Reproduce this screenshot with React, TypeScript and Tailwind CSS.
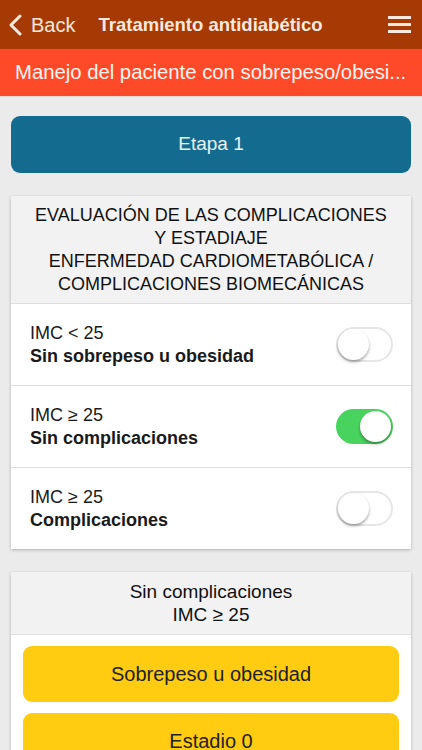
interface RowProps {
    label: string;
    title: string;
    on?: boolean;
}

function Toggle({ on }: { on?: boolean }) {
    return (
        <div className={on
            ? "w-[57px] h-[35px] rounded-full bg-[#48D35E] flex items-center justify-end px-[2px]"
            : "w-[57px] h-[35px] rounded-full bg-white border-2 border-[#e6e6e6] flex items-center justify-start"}>
            <div className="w-[31px] h-[31px] rounded-full bg-white shadow-[0_2px_3px_rgba(0,0,0,0.35)]" />
        </div>
    );
}

function Row({ label, title, on }: RowProps) {
    return (
        <div className="h-[82px] flex items-center justify-between pl-[19px] pr-[18px] border-t border-[#dedede] bg-white">
            <div className="text-[18px] leading-[23px] text-[#1a1a1a]">
                <div>{label}</div>
                <div className="font-bold">{title}</div>
            </div>
            <Toggle on={on} />
        </div>
    );
}

export default function App() {
    return (
        <div className="w-[422px] h-[750px] overflow-hidden bg-[#ebebeb] font-['Liberation_Sans',Arial,sans-serif]">
            <div className="h-[49px] bg-[#A53A05] flex items-center pl-[8px] pr-[11px] text-[#fbe9df]">
                <svg width="14" height="22" viewBox="0 0 14 22" className="mt-[1px]">
                    <path d="M12 2 L3 11 L12 20" fill="none" stroke="#fbe9df" strokeWidth="3" strokeLinecap="round" strokeLinejoin="round" />
                </svg>
                <span className="ml-[9px] text-[20px]">Back</span>
                <div className="ml-[23px] text-[18.5px] font-bold">Tratamiento antidiabético</div>
                <div className="ml-auto flex flex-col gap-[4px]">
                    <div className="w-[23px] h-[3px] bg-[#fbe9df]" />
                    <div className="w-[23px] h-[3px] bg-[#fbe9df]" />
                    <div className="w-[23px] h-[3px] bg-[#fbe9df]" />
                </div>
            </div>
            <div className="h-[48px] bg-[#FF4A2A] flex items-center px-[15px] text-[20.3px] text-[#fff4ef] border-b border-[#e2d6d0] whitespace-nowrap overflow-hidden">
                Manejo del paciente con sobrepeso/obesi...
            </div>

            <div className="px-[11px] pt-[19px]">
                <div className="h-[57px] rounded-[9px] bg-[#136B8F] flex items-center justify-center text-[19px] text-[#e8f1f5]">
                    Etapa 1
                </div>

                <div className="mt-[23px] bg-white shadow-[0_1px_3px_rgba(0,0,0,0.25)]">
                    <div className="h-[107px] bg-[#f2f2f2] flex flex-col justify-center text-center text-[18px] leading-[23px] text-[#111]">
                        <div>EVALUACIÓN DE LAS COMPLICACIONES</div>
                        <div>Y ESTADIAJE</div>
                        <div>ENFERMEDAD CARDIOMETABÓLICA /</div>
                        <div>COMPLICACIONES BIOMECÁNICAS</div>
                    </div>
                    <Row label="IMC < 25" title="Sin sobrepeso u obesidad" />
                    <Row label="IMC ≥ 25" title="Sin complicaciones" on />
                    <Row label="IMC ≥ 25" title="Complicaciones" />
                </div>

                <div className="mt-[23px] bg-white shadow-[0_1px_3px_rgba(0,0,0,0.25)] pb-[12px]">
                    <div className="h-[63px] bg-[#f2f2f2] flex flex-col justify-center text-center text-[19px] leading-[23px] text-[#111] border-b border-[#dedede]">
                        <div>Sin complicaciones</div>
                        <div>IMC ≥ 25</div>
                    </div>
                    <div className="px-[12px] pt-[11px] flex flex-col gap-[11px]">
                        <div className="h-[56px] rounded-[9px] bg-[#FFCC11] flex items-center justify-center text-[20px] text-[#222]">
                            Sobrepeso u obesidad
                        </div>
                        <div className="h-[56px] rounded-[9px] bg-[#FFCC11] flex items-center justify-center text-[20px] text-[#222]">
                            Estadio 0
                        </div>
                    </div>
                </div>
            </div>
        </div>
    );
}
